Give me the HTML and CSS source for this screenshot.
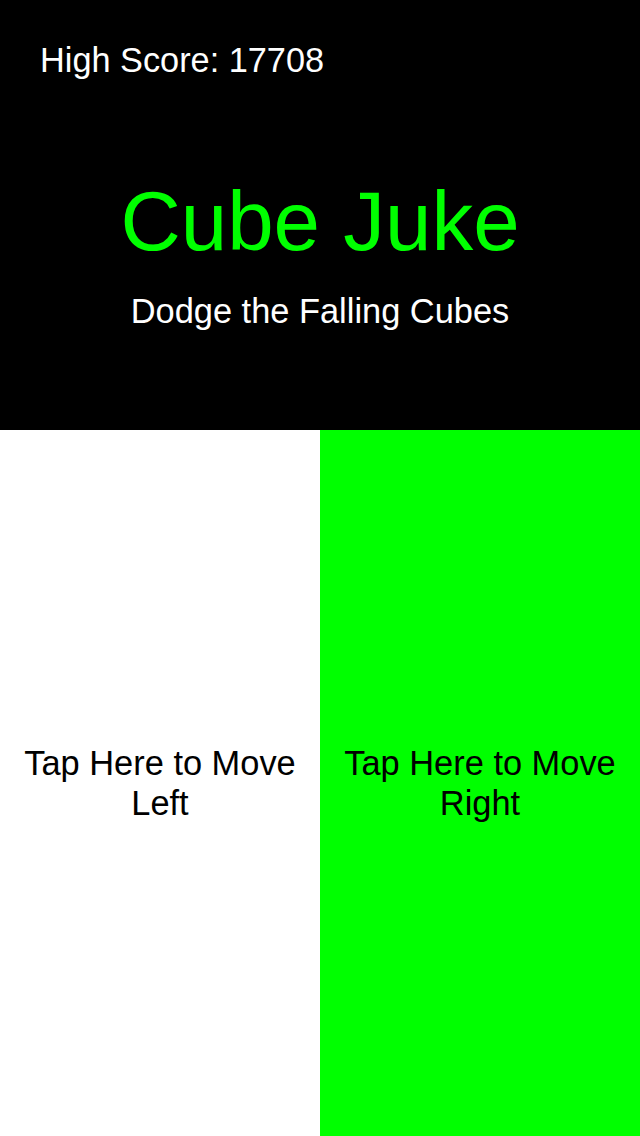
FILE: index.html
```html
<!DOCTYPE html>
<html lang="en">
<head>
    <meta charset="UTF-8">
    <meta name="viewport" content="width=device-width, initial-scale=1.0">
    <title>Cube Juke</title>
    <link rel="stylesheet" href="styles.css">
</head>
<body>
    <div class="top">
        <div class="high-score">High Score: 17708</div>
        <h1 class="title">Cube Juke</h1>
        <div class="subtitle">Dodge the Falling Cubes</div>
    </div>
    <div class="controls">
        <div class="tap tap-left">Tap Here to Move Left</div>
        <div class="tap tap-right">Tap Here to Move Right</div>
    </div>
</body>
</html>
```

FILE: styles.css
```css
html, body {
    margin: 0;
    padding: 0;
}
body {
    width: 640px;
    height: 1136px;
    display: flex;
    flex-direction: column;
    font-family: "Liberation Sans", Arial, sans-serif;
    background-color: #000;
}
.top {
    height: 430px;
    background-color: #000;
    color: #fff;
    display: flex;
    flex-direction: column;
    box-sizing: border-box;
    padding-top: 40px;
}
.high-score {
    font-size: 34.3px;
    line-height: 40px;
    padding-left: 40px;
}
.title {
    margin: 93px 0 0;
    font-weight: normal;
    font-size: 83.5px;
    line-height: 96px;
    color: #00ff00;
    text-align: center;
}
.subtitle {
    margin-top: 22px;
    font-size: 34.4px;
    line-height: 40px;
    text-align: center;
}
.controls {
    flex: 1;
    display: flex;
}
.tap {
    flex: 1;
    display: flex;
    align-items: center;
    justify-content: center;
    text-align: center;
    font-size: 34.4px;
    line-height: 40px;
    color: #000;
    padding: 0 12px;
}
.tap-left {
    background-color: #fff;
}
.tap-right {
    background-color: #00ff00;
}
```
